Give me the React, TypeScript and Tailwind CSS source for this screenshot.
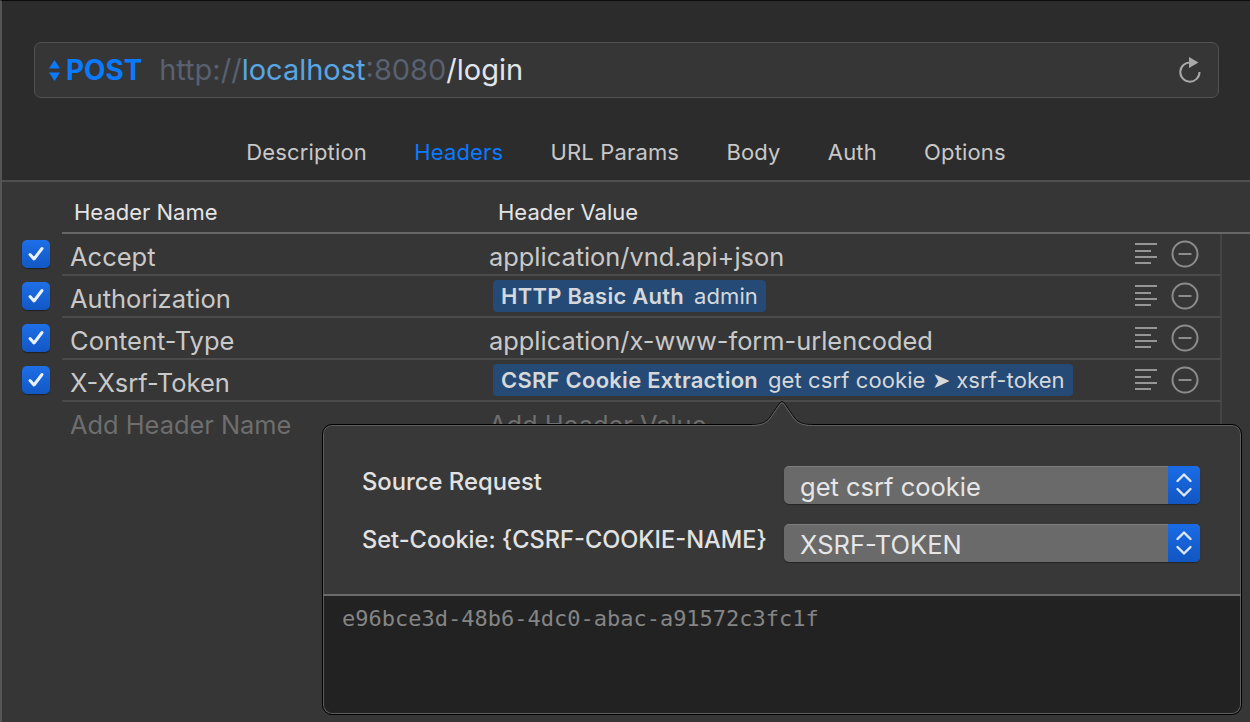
import React from "react";

const Check = () => (
  <div className="w-7 h-7 rounded-[5px] bg-gradient-to-b from-[#1e6fe8] to-[#1257c4] shadow-[0_1px_1px_rgba(0,0,0,0.4)] flex items-center justify-center shrink-0">
    <svg width="18" height="16" viewBox="0 0 18 16" fill="none">
      <path d="M3 8.5 L7 13 L15 2.5" stroke="#eaf2ff" strokeWidth="3" strokeLinecap="round" strokeLinejoin="round" />
    </svg>
  </div>
);

const RowIcons = () => (
  <div className="flex items-center gap-[13px] pr-[21px] shrink-0">
    <svg width="24" height="24" viewBox="0 0 24 24" fill="none" stroke="#969696" strokeWidth="2">
      <path d="M1 3H23M1 10H17M1 16H23M1 22H17" transform="translate(0 -1)" />
    </svg>
    <svg width="28" height="28" viewBox="0 0 28 28" fill="none" stroke="#8c8c8c" strokeWidth="2">
      <circle cx="14" cy="14" r="12.5" />
      <path d="M7.5 14H20.5" />
    </svg>
  </div>
);

const Pill = ({ title, sub }: { title: string; sub: React.ReactNode }) => (
  <div className="w-fit ml-1 -mt-[5px] h-8 rounded-[4px] bg-[#244a75] pl-2 pr-2 flex items-center gap-[10px] text-[22px] text-[#d6d8db] whitespace-nowrap">
    <span className="font-semibold tracking-[0.25px]">{title}</span>
    <span className="text-[22px] tracking-[0.1px]">{sub}</span>
  </div>
);

const Row = ({ name, value, pill }: { name: string; value?: string; pill?: React.ReactNode }) => (
  <div className="flex items-center h-[42px]">
    <div className="w-[60px] flex justify-end pr-3 -mt-[2px]">
      <Check />
    </div>
    <div className="flex-1 flex items-center h-full border-b-2 border-[#4b4b4b] border-r-2 border-r-[#444] mr-[28px]">
      <div className="w-[427px] pl-2 text-[25.5px] text-[#c9c9c9] pt-[5px] leading-none whitespace-nowrap">{name}</div>
      <div className="flex-1 min-w-0 text-[25.4px] text-[#c9c9c9] pt-[5px] leading-none whitespace-nowrap">{value ?? pill}</div>
      <RowIcons />
    </div>
  </div>
);

const SelectBox = ({ text }: { text: string }) => (
  <div className="w-[416px] h-[38px] rounded-[5px] bg-[#6a6a6a] flex shadow-[0_1px_1px_rgba(0,0,0,0.35)] border-t border-[#7d7d7d]">
    <div className="flex-1 pl-4 text-[25.5px] leading-[40px] text-[#e6e6e6]">{text}</div>
    <div className="w-8 rounded-r-[5px] bg-gradient-to-b from-[#1a6ce6] to-[#1256c2] flex items-center justify-center -mt-px">
      <svg width="18" height="28" viewBox="0 0 18 28" fill="none" stroke="#dfe9fb" strokeWidth="2.4" strokeLinecap="round" strokeLinejoin="round">
        <path d="M2.5 10 L9 3.5 L15.5 10" />
        <path d="M2.5 18 L9 24.5 L15.5 18" />
      </svg>
    </div>
  </div>
);

export default function App() {
  return (
    <div className="relative w-[1250px] h-[722px] overflow-hidden bg-[#363636] border-t border-t-[#0c0c0c] border-l-2 border-l-[#555] font-['Inter',sans-serif]">
      {/* Top area */}
      <div className="h-[181px] bg-[#2c2c2c] border-b-2 border-[#505050] pt-[41px] pl-[32px]">
        <div className="w-[1185px] h-[56px] rounded-[7px] border border-[#525252] bg-[#363636] flex items-center pl-[14px] pr-[16px]">
          <svg width="11" height="23" viewBox="0 0 11 23" fill="#0a7aff" className="shrink-0">
            <path d="M5.5 1 L11 9.5 H0 Z" />
            <path d="M5.5 22 L11 13.5 H0 Z" />
          </svg>
          <span className="ml-[6px] mt-[2px] text-[27.8px] font-bold text-[#0a7aff] leading-none">POST</span>
          <span className="ml-[17px] -mt-[2px] text-[29px] leading-none text-[#586170]">http://</span>
          <span className="-mt-[2px] text-[29px] leading-none text-[#58a6e4]">localhost</span>
          <span className="-mt-[2px] text-[29px] leading-none text-[#586170]">:8080</span>
          <span className="-mt-[2px] text-[29px] leading-none text-[#e2e5ea]">/login</span>
          <svg width="24" height="28" viewBox="0 0 24 28" fill="none" className="ml-auto shrink-0">
            <path d="M12.5 6.5 A9.6 9.6 0 1 0 21.5 16" stroke="#a8a8a8" strokeWidth="2" />
            <path d="M11 1 L20.5 6.5 L11 12 Z" fill="#a8a8a8" />
          </svg>
        </div>
        <div className="mt-[40px] flex justify-center gap-[47.3px] text-[22px] leading-7 tracking-[0.15px] text-[#c8c8c8] pr-[32px]">
          <span>Description</span>
          <span className="text-[#0a7aff]">Headers</span>
          <span>URL Params</span>
          <span>Body</span>
          <span>Auth</span>
          <span>Options</span>
        </div>
      </div>

      {/* Table header */}
      <div className="h-[52px] ml-[60px] border-b-2 border-[#666] flex items-center text-[22px] text-[#e4e4e4] pt-[10px]">
        <div className="w-[436px] pl-[12px]">Header Name</div>
        <div>Header Value</div>
      </div>

      {/* Rows */}
      <Row name="Accept" value="application/vnd.api+json" />
      <Row name="Authorization" pill={<Pill title="HTTP Basic Auth" sub="admin" />} />
      <Row name="Content-Type" value="application/x-www-form-urlencoded" />
      <Row name="X-Xsrf-Token" pill={<Pill title="CSRF Cookie Extraction" sub="get csrf cookie ➤ xsrf-token" />} />
      <div className="flex h-[42px] ml-[60px] mr-[28px] text-[25.4px] text-[#6e6e6e] items-center border-r-2 border-[#444] pt-[5px]">
        <div className="w-[427px] pl-2">Add Header Name</div>
        <div>Add Header Value</div>
      </div>

      {/* Popover */}
      <div className="absolute left-[320px] top-[423px] w-[920px] h-[291px] rounded-[10px] border border-black shadow-[inset_0_0_0_1px_#5e5e5e] bg-[#383838] flex flex-col">
        <svg className="absolute left-[419px] -top-[25px]" width="80" height="27" viewBox="0 0 80 27">
          <path d="M10 24.5 C20 24.5 24 22 28 17 L37 4 Q40 -1 43 4 L52 17 C56 22 60 24.5 70 24.5 V27 H10 Z" fill="#383838" />
          <path d="M10 24.5 C20 24.5 24 22 28 17 L37 4 Q40 -1 43 4 L52 17 C56 22 60 24.5 70 24.5" fill="none" stroke="#0c0c0c" strokeWidth="1" />
          <path d="M10 25.5 C20 25.5 24.5 23 28.5 18 L37.5 5 Q40 1 42.5 5 L51.5 18 C55.5 23 60 25.5 70 25.5" fill="none" stroke="#666" strokeWidth="1" />
        </svg>
        <div className="h-[171px] pl-[39px] pr-[41px] pt-[41px] border-b-2 border-[#6b6b6b] flex flex-col gap-5 shrink-0">
          <div className="flex items-center justify-between">
            <span className="text-[23.8px] font-medium text-[#e2e2e2] -mt-[7px]">Source Request</span>
            <SelectBox text="get csrf cookie" />
          </div>
          <div className="flex items-center justify-between">
            <span className="text-[23.6px] font-medium text-[#e2e2e2] -mt-[7px] whitespace-nowrap">{"Set-Cookie: {CSRF-COOKIE-NAME}"}</span>
            <SelectBox text="XSRF-TOKEN" />
          </div>
        </div>
        <div className="flex-1 m-px mt-0 rounded-b-[9px] bg-[#222222] pl-[18px] pt-[9px] font-['DejaVu_Sans_Mono',monospace] text-[22px] leading-7 text-[#858585]">
          e96bce3d-48b6-4dc0-abac-a91572c3fc1f
        </div>
      </div>
    </div>
  );
}
